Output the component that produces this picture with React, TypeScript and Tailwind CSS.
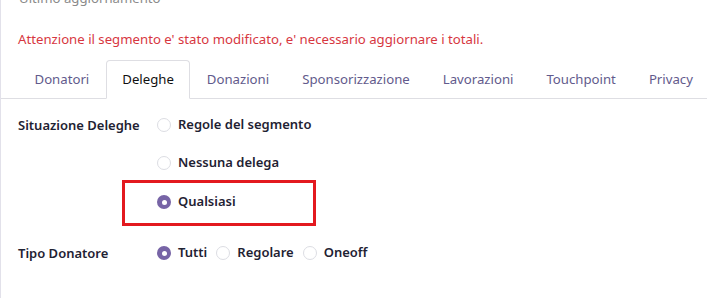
import React from "react";

const font = "font-['Segoe_UI','Noto_Sans',sans-serif]";

const Radio = ({ checked, label }: { checked?: boolean; label: string }) => (
  <label className="flex items-center gap-[7px]">
    {checked ? (
      <span className="flex h-[14px] w-[14px] items-center justify-center rounded-full bg-[#7764a6]">
        <span className="h-[5px] w-[5px] rounded-full bg-white" />
      </span>
    ) : (
      <span className="h-[14px] w-[14px] rounded-full border border-[#dcdde3] bg-white" />
    )}
    <span className="text-[13px] font-semibold text-[#1f2233]">{label}</span>
  </label>
);

export default function App() {
  const tabs = [
    "Donatori",
    "Deleghe",
    "Donazioni",
    "Sponsorizzazione",
    "Lavorazioni",
    "Touchpoint",
    "Privacy",
  ];

  return (
    <div className={`h-[298px] w-[707px] overflow-hidden bg-white ${font}`}>
      <div className="flex h-full flex-col border-l border-[#e2e1ea]">
        {/* Clipped header */}
        <div className="-mt-[12px] pl-[18px] text-[13.2px] leading-[20px] text-[#8a8a8a]">
          Ultimo aggiornamento
        </div>

        {/* Warning */}
        <p className="mt-[21px] pl-[17px] text-[13.2px] leading-[20px] text-[#d7373f]">
          Attenzione il segmento e' stato modificato, e' necessario aggiornare i totali.
        </p>

        {/* Tabs */}
        <div className="mt-[11px] flex border-b border-[#dedee3] pl-[17px]">
          {tabs.map((t) =>
            t === "Deleghe" ? (
              <div
                key={t}
                className="-mb-px rounded-t-[4px] border border-b-white border-[#dedee3] bg-white px-[15.5px] py-[8px] text-[13.2px] leading-[20px] text-[#111]"
              >
                {t}
              </div>
            ) : (
              <div
                key={t}
                className="border border-transparent px-[15.5px] py-[8px] text-[13.2px] leading-[20px] text-[#625a8c]"
              >
                {t}
              </div>
            )
          )}
        </div>

        {/* Form */}
        <div className="mt-[16px] flex pl-[17px]">
          <div className="w-[139px] text-[13px] font-semibold leading-[20px] text-[#1f2233]">
            Situazione Deleghe
          </div>
          <div className="flex flex-col">
            <div className="h-[20px] flex items-center">
              <Radio label="Regole del segmento" />
            </div>
            <div className="mt-[18px] h-[20px] flex items-center">
              <Radio label="Nessuna delega" />
            </div>
            <div className="relative mt-[19px] h-[20px] flex items-center">
              <Radio checked label="Qualsiasi" />
              <div className="pointer-events-none absolute -left-[35px] -top-[12px] h-[46px] w-[194px] border-[3px] border-[#e3191f]" />
            </div>
          </div>
        </div>

        <div className="mt-[31px] flex pl-[17px]">
          <div className="w-[139px] text-[13px] font-semibold leading-[20px] text-[#1f2233]">
            Tipo Donatore
          </div>
          <div className="flex h-[20px] items-center gap-[9px]">
            <Radio checked label="Tutti" />
            <Radio label="Regolare" />
            <Radio label="Oneoff" />
          </div>
        </div>
      </div>
    </div>
  );
}
